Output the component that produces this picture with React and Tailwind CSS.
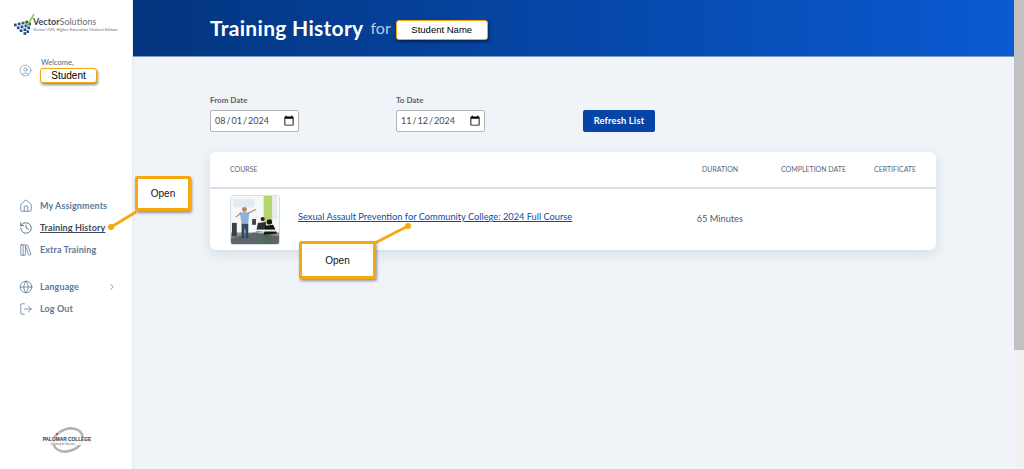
import { Home, History, LibraryBig, Globe, ChevronRight, LogOut, CircleUser } from "lucide-react";

const NAV_TOP = [
  { label: "My Assignments", Icon: Home },
  { label: "Training History", Icon: History, active: true },
  { label: "Extra Training", Icon: LibraryBig },
];

const NAV_BOTTOM = [
  { label: "Language", Icon: Globe, arrow: true },
  { label: "Log Out", Icon: LogOut },
];

function NavItem({ label, Icon, active, arrow }) {
  return (
    <div className="flex h-[22px] items-center pl-[19px] pr-[15px]">
      <Icon size={14} strokeWidth={1.25} className={"shrink-0 " + (active ? "text-[#33475c]" : "text-[#4f6f8f]")} />
      <span
        className={
          "ml-[7px] text-[9px] font-bold tracking-[0.1px] " +
          (active ? "text-[#3c4a5c] underline" : "text-[#5b7a99]")
        }
      >
        {label}
      </span>
      {arrow && <ChevronRight size={10} className="ml-auto text-[#6f8aa5]" />}
    </div>
  );
}

function VectorLogo() {
  const dots = [
    [0, 10], [4, 9], [8, 8], [12, 7],
    [3, 13], [7, 12], [11, 11], [15, 9],
    [6, 16], [10, 15], [14, 13],
    [10, 19], [13, 17],
  ];
  return (
    <svg width="21" height="23" viewBox="0 0 22 24" className="shrink-0">
      {dots.map(([x, y], i) => (
        <rect key={i} x={x} y={y} width="2.8" height="2.8" fill="#1f4e8c" />
      ))}
      <path d="M10 8 L14 12 L21 0" fill="none" stroke="#8cc63f" strokeWidth="1.6" />
    </svg>
  );
}

function Thumbnail() {
  return (
    <svg viewBox="0 0 50 50" className="h-[50px] w-[50px] rounded-[3px] border border-[#d5dfea]">
      <rect width="50" height="50" fill="#f6f8f8" />
      <rect x="2" y="3" width="22" height="9" fill="#e4ebee" />
      <rect x="34" y="0" width="9" height="29" fill="#b5d56f" />
      <rect x="43" y="0" width="5" height="24" fill="#e6ecea" />
      <rect x="0" y="38" width="50" height="12" fill="#8b9297" />
      <path d="M0 44 L24 38 L50 42 L50 50 L0 50 Z" fill="#5f666b" />
      <circle cx="14" cy="14" r="2.6" fill="#b98468" />
      <path d="M9 17 L19 17 L18 29 L11 29 Z" fill="#8fb0d8" />
      <path d="M18 18 L26 14 M10 18 L5 22" stroke="#b98468" strokeWidth="1.3" />
      <path d="M11 29 L11 44 L13.5 44 L14.5 32 L15.5 44 L18 44 L18 29 Z" fill="#2d4a66" />
      <rect x="22" y="24" width="4" height="6" fill="#3a4148" />
      <circle cx="33" cy="24" r="2.2" fill="#33231d" />
      <path d="M28 28 L36 27 L38 36 L26 38 Z" fill="#2b3136" />
      <circle cx="40" cy="27" r="2.8" fill="#1e1613" />
      <path d="M36 31 L44 30 L48 39 L34 41 Z" fill="#141618" />
      <rect x="24" y="35" width="26" height="2" fill="#f0f2f2" />
      <rect x="35" y="40" width="6" height="9" fill="#4d6a4f" />
      <rect x="1" y="28" width="5" height="14" fill="#3a3f44" />
    </svg>
  );
}

function DateField({ label, value }) {
  return (
    <div className="flex w-[89px] flex-col">
      <label className="mb-[4px] text-[8px] font-bold leading-[12px] text-[#555f6b]">{label}</label>
      <input
        type="date"
        defaultValue={value}
        className="h-[22px] w-[89px] rounded-[2px] border border-[#b5b5b5] bg-white px-[3px] text-[9px] text-[#3f4a57] [&::-webkit-calendar-picker-indicator]:h-[12px] [&::-webkit-calendar-picker-indicator]:w-[12px] [&::-webkit-calendar-picker-indicator]:p-0"
      />
    </div>
  );
}

function NameBox({ children, className }) {
  return (
    <div
      className={
        "flex items-center justify-center rounded-[3px] border-[1.5px] border-[#f0a90f] bg-white font-['Liberation_Sans',sans-serif] text-black shadow-[1px_2px_3px_rgba(0,0,0,0.45)] " +
        className
      }
    >
      {children}
    </div>
  );
}

function OpenCallout({ className }) {
  return (
    <div
      className={
        "absolute flex items-center justify-center rounded-[2px] border-[3px] border-[#f5a911] bg-white font-['Liberation_Sans',sans-serif] text-[10px] text-[#111] shadow-[1px_2px_3px_rgba(0,0,0,0.4)] " +
        className
      }
    >
      Open
    </div>
  );
}

export default function App() {
  return (
    <div className="relative flex h-[469px] w-[1024px] overflow-hidden bg-white font-['Lato',sans-serif]">
      <aside className="flex h-full w-[133px] shrink-0 flex-col border-r border-[#e6ebf0] bg-white">
        <div className="flex items-start pl-[14px] pt-[14px]">
          <VectorLogo />
          <div className="ml-[-2px] mt-[3px] flex flex-col">
            <div className="text-[9px] leading-[10px] text-[#6a737c]">
              <span className="font-bold text-[#3d4650]">Vector</span>Solutions
            </div>
            <div className="whitespace-nowrap text-[4.2px] leading-[6px] text-[#6a737c]">
              Vector LMS, Higher Education Student Edition
            </div>
          </div>
        </div>

        <div className="mt-[21px] flex items-center pl-[19px]">
          <CircleUser size={13} strokeWidth={1.1} className="text-[#5b82ab]" />
          <div className="ml-[9px] flex flex-col">
            <span className="text-[7.5px] leading-[9px] text-[#4d6a8a]">Welcome,</span>
            <NameBox className="ml-[-1px] mt-[1px] h-[15px] w-[57px] text-[10px]">Student</NameBox>
          </div>
        </div>

        <nav className="mt-[112px] flex flex-col">
          {NAV_TOP.map((n) => (
            <NavItem key={n.label} {...n} />
          ))}
        </nav>
        <nav className="mt-[15px] flex flex-col">
          {NAV_BOTTOM.map((n) => (
            <NavItem key={n.label} {...n} />
          ))}
        </nav>

        <div className="mt-auto flex flex-col items-center pb-[14px] pl-[2px]">
          <svg width="50" height="30" viewBox="0 0 50 30">
            <ellipse cx="26" cy="15" rx="15" ry="11" fill="none" stroke="#b4b4b4" strokeWidth="2.6" transform="rotate(-20 26 15)" />
            <circle cx="15" cy="9" r="1.1" fill="#d9342b" />
            <rect x="0" y="12" width="50" height="8" fill="#fafafa" opacity="0.9" />
            <text x="25" y="16" textAnchor="middle" fontSize="4.8" fontWeight="700" fill="#33383d" fontFamily="Liberation Sans, sans-serif">PALOMAR COLLEGE</text>
            <text x="21" y="19.5" textAnchor="middle" fontSize="2.6" fill="#666" fontFamily="Liberation Sans, sans-serif">Learning for Success</text>
          </svg>
        </div>
      </aside>

      <main className="flex min-w-0 flex-1 flex-col bg-[#f0f4f8]">
        <header className="flex h-[57px] shrink-0 items-center border-b border-[#7f9cc5] bg-gradient-to-r from-[#03357f] to-[#0a5ad2] pb-[1px] pl-[77px]">
          <h1 className="text-[21px] font-bold leading-none tracking-[0.3px] text-white">Training History</h1>
          <span className="ml-[7px] text-[16px] leading-none text-[#b9c9e2]">for</span>
          <NameBox className="ml-[5px] mt-[5px] h-[20px] w-[92px] text-[9.5px]">Student Name</NameBox>
        </header>

        <div className="flex flex-col pl-[77px] pr-[78px] pt-[37px]">
          <div className="flex items-end">
            <DateField label="From Date" value="2024-08-01" />
            <div className="ml-[97px]">
              <DateField label="To Date" value="2024-11-12" />
            </div>
            <button className="ml-[98px] h-[22px] w-[72px] rounded-[2px] bg-[#0645a5] text-[9.25px] font-bold tracking-[0.2px] text-white">
              Refresh List
            </button>
          </div>

          <section className="mt-[20px] h-[98px] rounded-[6px] bg-white shadow-[0_4px_12px_rgba(150,165,190,0.3)]">
            <div className="flex h-[37px] items-center border-b-[2px] border-[#d8e0ea] pl-[20px] text-[7px] text-[#5b6675]">
              <span className="flex-1">COURSE</span>
              <span className="w-[79px]">DURATION</span>
              <span className="w-[93px]">COMPLETION DATE</span>
              <span className="w-[62px]">CERTIFICATE</span>
            </div>
            <div className="flex h-[61px] items-center pl-[20px]">
              <Thumbnail />
              <a className="ml-[18px] mt-[-5px] text-[9.25px] text-[#0b4ba8] underline">
                Sexual Assault Prevention for Community College: 2024 Full Course
              </a>
              <span className="ml-auto mr-[193px] mt-[-2px] text-[9.25px] text-[#4f5c6b]">65 Minutes</span>
            </div>
          </section>
        </div>
      </main>

      <div className="h-full w-[10px] shrink-0 bg-[#f1f1f1]">
        <div className="h-[350px] w-full bg-[#c1c1c1]" />
      </div>

      {/* annotation overlay */}
      <svg className="pointer-events-none absolute left-0 top-0" width="1024" height="469">
        <path d="M136 212 L111 227" stroke="#f5a911" strokeWidth="3" />
        <circle cx="111" cy="227" r="3" fill="#f5a911" />
        <path d="M375 243 L408 226" stroke="#f5a911" strokeWidth="3" />
        <circle cx="408" cy="226" r="3" fill="#f5a911" />
      </svg>
      <OpenCallout className="left-[135px] top-[176px] h-[35px] w-[56px]" />
      <OpenCallout className="left-[299px] top-[241px] h-[38px] w-[77px]" />
    </div>
  );
}
